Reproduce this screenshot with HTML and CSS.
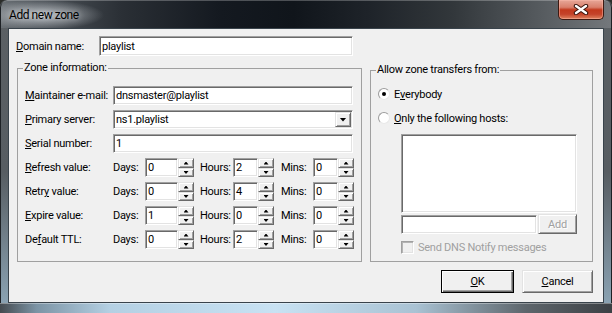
FILE: index.html
```html
<!DOCTYPE html>
<html>
<head>
    <meta charset="UTF-8">
    <title>Add new zone</title>
    <link rel="stylesheet" href="styles.css">
</head>
<body>
    <div class="window">
        <div class="titlebar">
            <span class="title">Add new zone</span>
            <span class="close-btn">
                <svg width="16" height="11" viewBox="0 0 16 11">
                    <path d="M3 2 L13 9 M13 2 L3 9" stroke="#3a140c" stroke-width="4.4" stroke-linecap="round"/>
                    <path d="M3 2 L13 9 M13 2 L3 9" stroke="#fff" stroke-width="2.4" stroke-linecap="round"/>
                </svg>
            </span>
        </div>

        <div class="client">
            <div class="line domain">
                <span class="cap"><u>D</u>omain name:</span>
                <div class="edit">playlist</div>
            </div>

            <div class="groups">
                <fieldset class="group zone">
                    <legend>Zone information:</legend>
                    <div class="rows">
                        <div class="line row">
                            <span class="cap"><u>M</u>aintainer e-mail:</span>
                            <div class="edit wide">dnsmaster@playlist</div>
                        </div>
                        <div class="line row">
                            <span class="cap"><u>P</u>rimary server:</span>
                            <div class="edit wide combo">
                                <span>ns1.playlist</span>
                                <span class="raised drop"><i class="tri-down big"></i></span>
                            </div>
                        </div>
                        <div class="line row">
                            <span class="cap"><u>S</u>erial number:</span>
                            <div class="edit wide">1</div>
                        </div>
                        <div class="line row">
                            <span class="cap"><u>R</u>efresh value:</span>
                            <span class="unit">Days:</span><div class="edit num days">0</div><span class="spin"><i class="raised up"><b class="tri-up"></b></i><i class="raised down"><b class="tri-down"></b></i></span>
                            <span class="unit hours">Hours:</span><div class="edit num">2</div><span class="spin"><i class="raised up"><b class="tri-up"></b></i><i class="raised down"><b class="tri-down"></b></i></span>
                            <span class="unit mins">Mins:</span><div class="edit num">0</div><span class="spin"><i class="raised up"><b class="tri-up"></b></i><i class="raised down"><b class="tri-down"></b></i></span>
                        </div>
                        <div class="line row">
                            <span class="cap">Retr<u>y</u> value:</span>
                            <span class="unit">Days:</span><div class="edit num days">0</div><span class="spin"><i class="raised up"><b class="tri-up"></b></i><i class="raised down"><b class="tri-down"></b></i></span>
                            <span class="unit hours">Hours:</span><div class="edit num">4</div><span class="spin"><i class="raised up"><b class="tri-up"></b></i><i class="raised down"><b class="tri-down"></b></i></span>
                            <span class="unit mins">Mins:</span><div class="edit num">0</div><span class="spin"><i class="raised up"><b class="tri-up"></b></i><i class="raised down"><b class="tri-down"></b></i></span>
                        </div>
                        <div class="line row">
                            <span class="cap"><u>E</u>xpire value:</span>
                            <span class="unit">Days:</span><div class="edit num days">1</div><span class="spin"><i class="raised up"><b class="tri-up"></b></i><i class="raised down"><b class="tri-down"></b></i></span>
                            <span class="unit hours">Hours:</span><div class="edit num">0</div><span class="spin"><i class="raised up"><b class="tri-up"></b></i><i class="raised down"><b class="tri-down"></b></i></span>
                            <span class="unit mins">Mins:</span><div class="edit num">0</div><span class="spin"><i class="raised up"><b class="tri-up"></b></i><i class="raised down"><b class="tri-down"></b></i></span>
                        </div>
                        <div class="line row">
                            <span class="cap">De<u>f</u>ault TTL:</span>
                            <span class="unit">Days:</span><div class="edit num days">0</div><span class="spin"><i class="raised up"><b class="tri-up"></b></i><i class="raised down"><b class="tri-down"></b></i></span>
                            <span class="unit hours">Hours:</span><div class="edit num">2</div><span class="spin"><i class="raised up"><b class="tri-up"></b></i><i class="raised down"><b class="tri-down"></b></i></span>
                            <span class="unit mins">Mins:</span><div class="edit num">0</div><span class="spin"><i class="raised up"><b class="tri-up"></b></i><i class="raised down"><b class="tri-down"></b></i></span>
                        </div>
                    </div>
                </fieldset>

                <fieldset class="group transfers">
                    <legend>Allow zone transfers from:</legend>
                    <div class="line opt"><span class="radio on"></span>E<u>v</u>erybody</div>
                    <div class="line opt"><span class="radio"></span><u>O</u>nly the following hosts:</div>
                    <div class="hosts">
                        <div class="edit list"></div>
                        <div class="line add-row">
                            <div class="edit host"></div>
                            <span class="raised add">Add</span>
                        </div>
                        <div class="line notify">
                            <span class="check"></span>Send DNS Notify messages
                        </div>
                    </div>
                </fieldset>
            </div>

            <div class="buttons">
                <span class="btn ok"><u>O</u>K</span>
                <span class="btn raised cancel"><u>C</u>ancel</span>
            </div>
        </div>

        <div class="frame-bottom"></div>
    </div>
</body>
</html>
```

FILE: styles.css
```css
* {
    box-sizing: border-box;
}

html, body {
    margin: 0;
    padding: 0;
}

body {
    width: 612px;
    height: 313px;
    overflow: hidden;
    font-family: Roboto, "Liberation Sans", sans-serif;
    font-size: 11px;
    letter-spacing: -0.25px;
    color: #000;
    background: #2b2d2a;
}

u {
    text-decoration-thickness: 1px;
    text-underline-offset: 1px;
}

.window {
    width: 612px;
    height: 313px;
    display: flex;
    flex-direction: column;
    background: linear-gradient(to bottom, #5b6064 0%, #575d62 55%, #8ea7b8 100%);
    border-radius: 7px 7px 0 0;
    box-shadow: inset 0 0 0 1px #1d2125;
}

/* glass title bar */
.titlebar {
    height: 28px;
    display: flex;
    justify-content: space-between;
    align-items: flex-start;
    padding: 0 8px 0 9px;
    border-radius: 7px 7px 0 0;
    background:
        radial-gradient(ellipse 62px 15px at 42px 15px, rgba(205, 210, 215, 0.85), rgba(205, 210, 215, 0)),
        linear-gradient(to right, #6c7277 0%, #4f555b 6%, #2a2f35 20%, #141920 36%, #10151b 48%, #1e2329 60%, #32373b 74%, #555a5e 88%, #74787c 100%);
    box-shadow: inset 0 1px 0 rgba(255, 255, 255, 0.25), inset 1px 0 0 #1d2125, inset -1px 0 0 #1d2125;
}

.title {
    margin-top: 7px;
    font-size: 12px;
    line-height: 16px;
    letter-spacing: -0.45px;
    color: #000;
    text-shadow: 0 0 6px rgba(255, 255, 255, 0.6);
}

.close-btn {
    width: 46px;
    height: 20px;
    display: flex;
    align-items: center;
    justify-content: center;
    border: 1px solid #3d1a12;
    border-top: none;
    border-radius: 0 0 5px 5px;
    background: linear-gradient(to bottom, #e7a798 0%, #d9806c 38%, #c2391d 52%, #c4432a 75%, #de835f 100%);
    box-shadow: inset 0 0 0 1px rgba(255, 190, 175, 0.45);
}

/* dialog body */
.client {
    margin: 0 8px;
    height: 275px;
    border: 1px solid #39434b;
    background: #f0f0f0;
    padding: 7px 10px 0 7px;
}

.frame-bottom {
    height: 10px;
    background: linear-gradient(to right, #454b50 0%, #7c94a5 6%, #b4d0e3 18%, #c8e2f3 45%, #a9c2d3 68%, #5d656b 86%, #3c4044 100%);
    box-shadow: inset 0 1px 0 rgba(255, 255, 255, 0.35);
}

.line {
    display: flex;
    align-items: center;
}

.domain {
    height: 20px;
}

.domain .cap {
    width: 83px;
}

.domain .edit {
    width: 254px;
    height: 20px;
}

/* sunken edit box */
.edit {
    display: flex;
    align-items: center;
    background: #fff;
    border: 1px solid;
    border-color: #a0a0a0 #fff #fff #a0a0a0;
    box-shadow: inset 1px 1px 0 #696969, inset -1px -1px 0 #e3e3e3;
    padding: 0 1px 0 2px;
    white-space: nowrap;
}

/* raised 3d face */
.raised {
    background: #f0f0f0;
    border: 1px solid;
    border-color: #e3e3e3 #696969 #696969 #e3e3e3;
    box-shadow: inset 1px 1px 0 #fff, inset -1px -1px 0 #a0a0a0;
}

.groups {
    display: flex;
    align-items: flex-start;
    gap: 8px;
    margin: 5px 0 0 1px;
}

.group {
    margin: 0;
    min-width: 0;
    border: 1px solid #a0a0a0;
}

.group legend {
    margin-left: -2px;
    padding: 0 1px;
    line-height: 14px;
}

.zone {
    width: 345px;
    padding: 11px 7px 12px;
}

.transfers {
    width: 223px;
    margin-top: 2px;
    padding: 9px 7px 7px;
}

.rows {
    display: flex;
    flex-direction: column;
    gap: 5px;
}

.row {
    height: 19px;
}

.row .cap {
    width: 88px;
    flex: none;
}

.edit.wide {
    width: 240px;
    height: 19px;
}

.combo {
    justify-content: space-between;
    padding: 1px 1px 1px 2px;
}

.drop {
    width: 16px;
    height: 15px;
    display: flex;
    align-items: center;
    justify-content: center;
}

.unit {
    width: 32px;
    flex: none;
}

.unit.hours {
    width: 33px;
    margin-left: 6px;
}

.unit.mins {
    margin-left: 7px;
}

.edit.num {
    width: 25px;
    height: 19px;
    flex: none;
}

.edit.days {
    width: 33px;
}

.spin {
    width: 16px;
    height: 19px;
    display: flex;
    flex-direction: column;
    flex: none;
}

.spin i {
    display: flex;
    align-items: center;
    justify-content: center;
}

.spin .up {
    height: 10px;
}

.spin .down {
    height: 9px;
}

.tri-up, .tri-down {
    display: block;
    width: 5px;
    height: 3px;
    background: #000;
}

.tri-up {
    clip-path: polygon(50% 0, 100% 100%, 0 100%);
}

.tri-down {
    clip-path: polygon(0 0, 100% 0, 50% 100%);
}

.tri-down.big {
    width: 7px;
    height: 4px;
}

/* transfer options */
.opt {
    height: 16px;
}

.opt + .opt {
    margin-top: 8px;
}

.radio {
    width: 12px;
    height: 12px;
    margin-right: 4px;
    border-radius: 50%;
    background: #fff;
    border: 1px solid;
    border-color: #9c9c9c #e8e8e8 #e8e8e8 #9c9c9c;
    display: flex;
    align-items: center;
    justify-content: center;
}

.radio.on::after {
    content: "";
    width: 4px;
    height: 4px;
    border-radius: 50%;
    background: #000;
}

.hosts {
    margin-left: 23px;
}

.list {
    width: 176px;
    height: 79px;
    margin-top: 8px;
}

.add-row {
    gap: 1px;
    margin-top: 1px;
}

.edit.host {
    width: 136px;
    height: 19px;
}

.add {
    width: 39px;
    height: 20px;
    display: flex;
    align-items: center;
    justify-content: center;
    color: #a0a0a0;
    text-shadow: 1px 1px 0 #fff;
}

.notify {
    margin-top: 7px;
    height: 13px;
    color: #a0a0a0;
}

.check {
    width: 13px;
    height: 13px;
    margin-right: 4px;
    background: #f0f0f0;
    border: 1px solid;
    border-color: #a0a0a0 #fff #fff #a0a0a0;
    box-shadow: inset 1px 1px 0 #b4b4b4, inset -1px -1px 0 #e3e3e3;
}

/* dialog buttons */
.buttons {
    display: flex;
    justify-content: flex-end;
    gap: 8px;
    margin-top: 8px;
}

.btn {
    height: 23px;
    display: flex;
    align-items: center;
    justify-content: center;
}

.btn.ok {
    width: 73px;
    background: #f0f0f0;
    border: 1px solid #000;
    box-shadow: inset 1px 1px 0 #fff, inset -1px -1px 0 #696969, inset -2px -2px 0 #a0a0a0;
}

.btn.cancel {
    width: 71px;
}
```
